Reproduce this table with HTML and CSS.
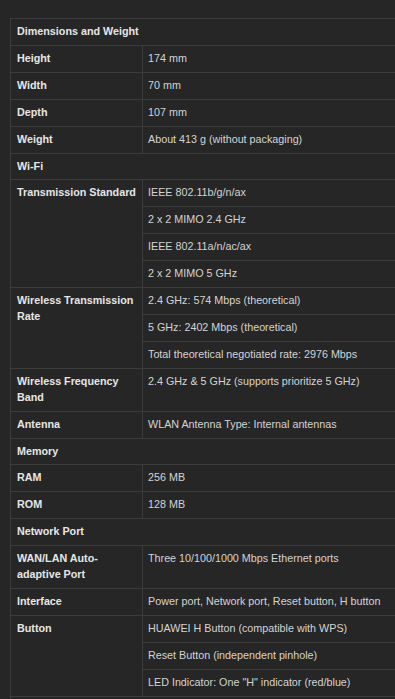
FILE: index.html
```html
<!DOCTYPE html>
<html lang="en">
<head>
<meta charset="utf-8">
<title>Specifications</title>
<link rel="stylesheet" href="styles.css">
</head>
<body>
<table class="spec">
  <colgroup><col class="c-label"><col class="c-value"></colgroup>
  <tbody>
    <tr><th class="sec" colspan="2">Dimensions and Weight</th></tr>
    <tr><th>Height</th><td>174 mm</td></tr>
    <tr><th>Width</th><td>70 mm</td></tr>
    <tr><th>Depth</th><td>107 mm</td></tr>
    <tr><th>Weight</th><td>About 413 g (without packaging)</td></tr>
    <tr><th class="sec" colspan="2">Wi-Fi</th></tr>
    <tr><th rowspan="4">Transmission Standard</th><td>IEEE 802.11b/g/n/ax</td></tr>
    <tr><td>2 x 2 MIMO 2.4 GHz</td></tr>
    <tr><td>IEEE 802.11a/n/ac/ax</td></tr>
    <tr><td>2 x 2 MIMO 5 GHz</td></tr>
    <tr><th rowspan="3">Wireless Transmission Rate</th><td>2.4 GHz: 574 Mbps (theoretical)</td></tr>
    <tr><td>5 GHz: 2402 Mbps (theoretical)</td></tr>
    <tr><td>Total theoretical negotiated rate: 2976 Mbps</td></tr>
    <tr><th>Wireless Frequency Band</th><td>2.4 GHz &amp; 5 GHz (supports prioritize 5 GHz)</td></tr>
    <tr><th>Antenna</th><td>WLAN Antenna Type: Internal antennas</td></tr>
    <tr><th class="sec" colspan="2">Memory</th></tr>
    <tr><th>RAM</th><td>256 MB</td></tr>
    <tr><th>ROM</th><td>128 MB</td></tr>
    <tr><th class="sec" colspan="2">Network Port</th></tr>
    <tr><th>WAN/LAN Auto-adaptive Port</th><td>Three 10/100/1000 Mbps Ethernet ports</td></tr>
    <tr><th>Interface</th><td>Power port, Network port, Reset button, H button</td></tr>
    <tr><th rowspan="3">Button</th><td>HUAWEI H Button (compatible with WPS)</td></tr>
    <tr><td>Reset Button (independent pinhole)</td></tr>
    <tr><td>LED Indicator: One "H" indicator (red/blue)</td></tr>
    <tr><td class="next" colspan="2"></td></tr>
  </tbody>
</table>
</body>
</html>
```
FILE: styles.css
```css
html {
  overflow: hidden;
  background: #262626;
}
body {
  margin: 0;
  padding: 18px 0 0 10px;
  background: #262626;
  font-family: "Liberation Sans", Arial, sans-serif;
  font-size: 10.75px;
  line-height: 15.9px;
  color: #d2d2d2;
}
.spec {
  border-collapse: collapse;
  table-layout: fixed;
  width: 420px;
}
.c-label { width: 132px; }
.spec th,
.spec td {
  border: 1px solid #3b3b3b;
  padding: 5px 6px;
  text-align: left;
  vertical-align: top;
}
.spec th {
  font-weight: bold;
  color: #e6e6e6;
}
.spec td {
  padding-left: 5px;
  font-weight: normal;
  color: #d4d4d4;
  white-space: nowrap;
}
.spec .next {
  height: 16px;
}
```
